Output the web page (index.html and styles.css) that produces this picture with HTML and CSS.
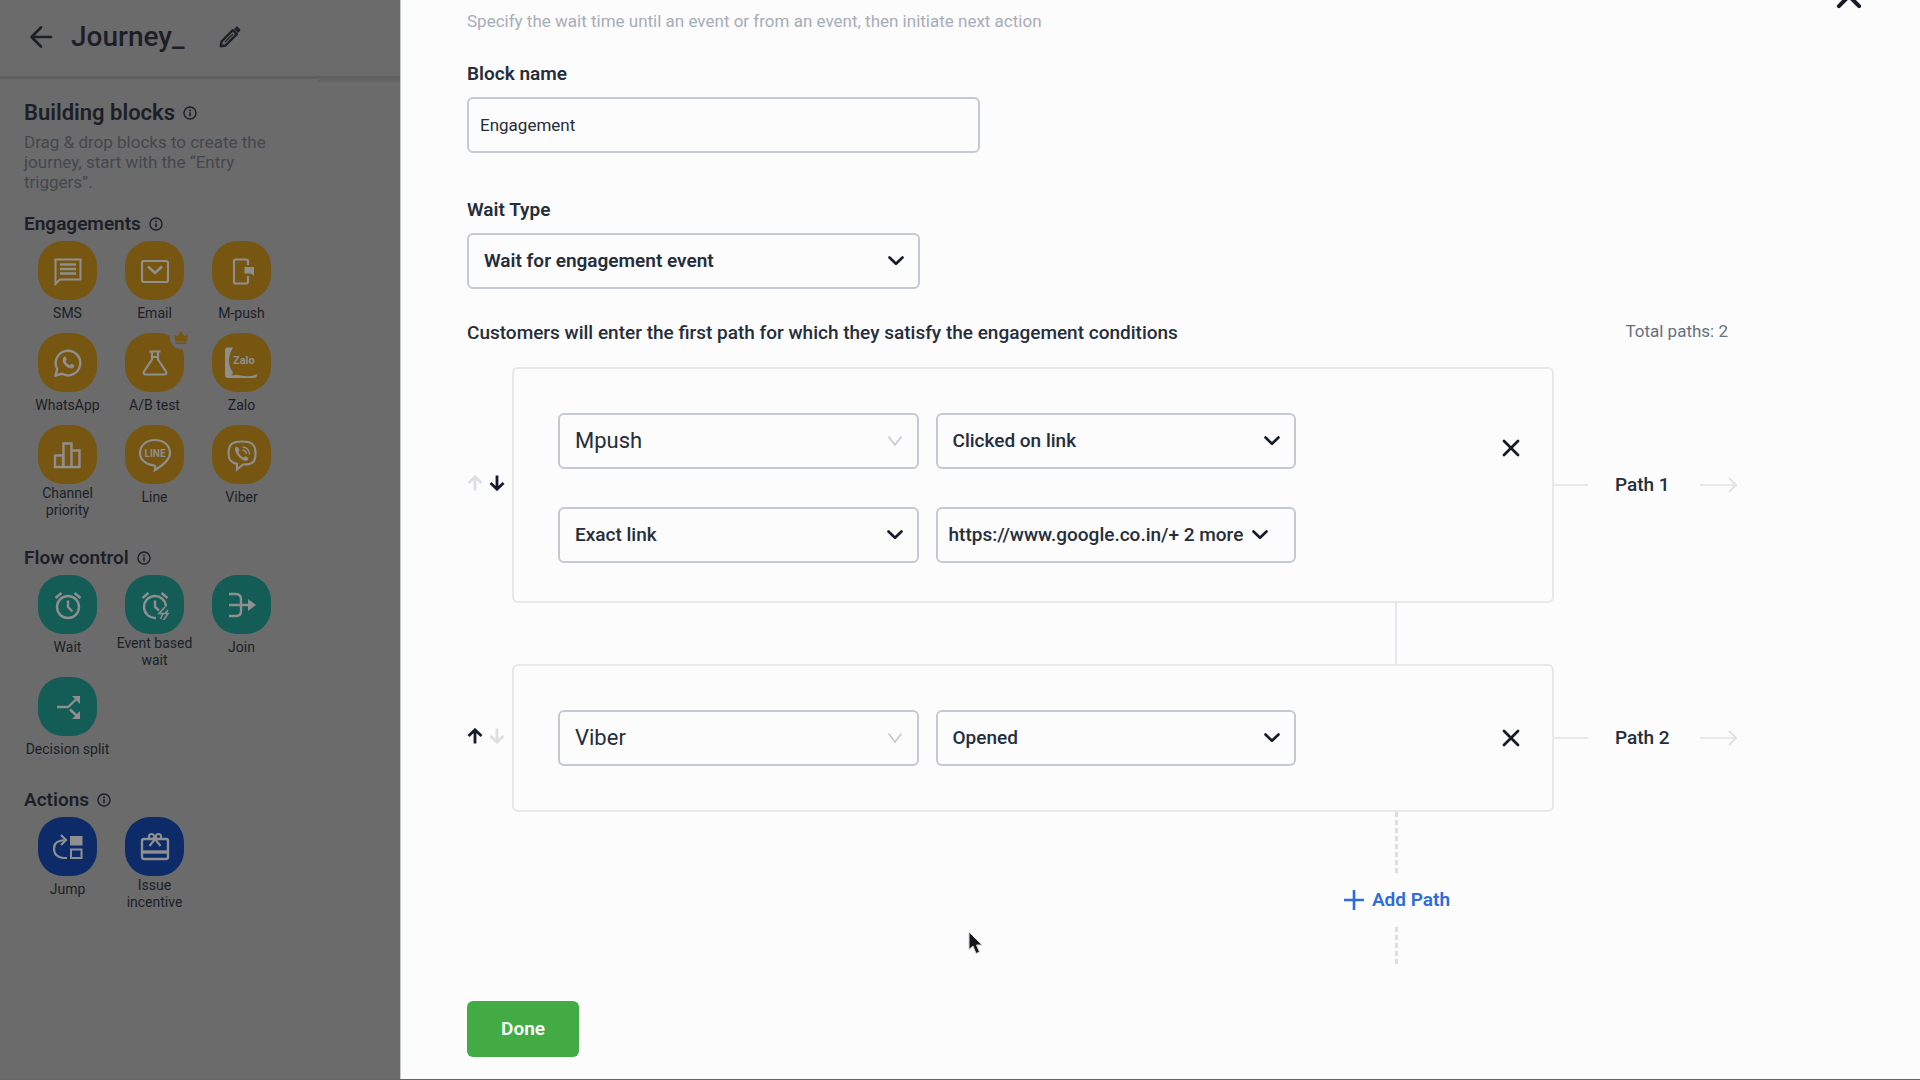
FILE: index.html
```html
<!DOCTYPE html>
<html lang="en">
<head>
<meta charset="utf-8">
<meta name="viewport" content="width=device-width, initial-scale=1">
<title>Journey_</title>
<link rel="stylesheet" href="styles.css">
</head>
<body>
<svg class="defs" aria-hidden="true">
  <symbol id="info" viewBox="0 0 16 16"><circle cx="8" cy="8" r="6.9" fill="none" stroke="currentColor" stroke-width="1.6"/><circle cx="8" cy="5" r="1.1" fill="currentColor"/><path d="M8 7.2v4.4" stroke="currentColor" stroke-width="1.8"/></symbol>
  <symbol id="chevron" viewBox="0 0 16 10"><path d="M1.5 1.5 8 7.8l6.500-6.300" fill="none" stroke="currentColor" stroke-width="2.600" stroke-linecap="round" stroke-linejoin="round"/></symbol>
  <symbol id="chevron-thin" viewBox="0 0 16 10"><path d="M1.500.5 8 9l6.500-8.500" fill="none" stroke="currentColor" stroke-width="1.500"/></symbol>
  <symbol id="up" viewBox="0 0 16 16"><path d="M8 15.500V2M1.500 8 8 1.800 14.500 8" fill="none" stroke="currentColor" stroke-width="2.800"/></symbol>
  <symbol id="down" viewBox="0 0 16 16"><path d="M8 .5V14M1.500 8 8 14.200 14.500 8" fill="none" stroke="currentColor" stroke-width="2.800"/></symbol>
  <symbol id="cross" viewBox="0 0 18 18"><path d="m2 2 14 14M16 2 2 16" fill="none" stroke="currentColor" stroke-width="2.800" stroke-linecap="round"/></symbol>
  <symbol id="out" viewBox="0 0 38 16"><path d="M0 8h36" stroke="currentColor" stroke-width="1.500"/><path d="m29 1 7 7-7 7" fill="none" stroke="currentColor" stroke-width="2"/></symbol>
</svg>
<div class="app">
  <aside class="sidebar">
    <header class="topbar">
      <button class="icon-btn" type="button" aria-label="Back"><svg width="24" height="24" viewBox="0 0 24 24"><path d="M22 12H3.500M12 2.500 2.500 12l9.500 9.500" fill="none" stroke="currentColor" stroke-width="2.600" stroke-linecap="round" stroke-linejoin="round"/></svg></button>
      <h1>Journey_</h1>
      <button class="icon-btn" type="button" aria-label="Rename"><svg width="22" height="22" viewBox="0 0 22 22"><path d="m1.800 20.200.7-4.700L13.800 4.200l4 4L6.500 19.500z" fill="none" stroke="currentColor" stroke-width="2.400" stroke-linejoin="round"/><path d="m6 16 8-8" stroke="currentColor" stroke-width="1.200"/><path d="m15 3 2.200-2.200q.8-.6 1.600.1l2.300 2.300q.7.800.1 1.600L19 7z" fill="currentColor"/></svg></button>
    </header>
    <div class="blocks">
      <h2>Building blocks <svg class="info"><use href="#info"/></svg></h2>
      <p class="hint">Drag &amp; drop blocks to create the journey, start with the “Entry triggers”.</p>

      <h3>Engagements <svg class="info"><use href="#info"/></svg></h3>
      <ul class="tiles yellow">
        <li><span class="tile"><svg viewBox="0 0 30 30"><path d="M2.500 28V3.500h25v20H7z" fill="none" stroke="currentColor" stroke-width="2"/><path d="M7 8.500h16M7 13h16M7 17.500h16" stroke="currentColor" stroke-width="2.400"/></svg></span><span class="label">SMS</span></li>
        <li><span class="tile"><svg viewBox="0 0 30 30"><rect x="2" y="5" width="26" height="21" rx="2" fill="none" stroke="currentColor" stroke-width="2.200"/><path d="M8 10.500l7 6.500 7-6.500" fill="none" stroke="currentColor" stroke-width="2.600"/></svg></span><span class="label">Email</span></li>
        <li><span class="tile"><svg viewBox="0 0 30 30"><path d="M21 9V5.500Q21 3.500 19 3.500H9Q7 3.500 7 5.500v20q0 2 2 2h10q2 0 2-2V20" fill="none" stroke="currentColor" stroke-width="2.200"/><path d="M17.500 11h9.500v9l-3-2.500h-6.500z" fill="currentColor"/></svg></span><span class="label">M-push</span></li>
        <li><span class="tile"><svg viewBox="0 0 30 30"><path d="M2.500 27.500 4.200 21A12.300 12.300 0 1 1 9 25.800z" fill="none" stroke="currentColor" stroke-width="2.400"/><path d="M10.500 9.500c1-1.500 2.200-1 2.500.3l.7 2-1 1.700c.9 1.800 2.200 3 4 3.800l1.600-1.500 2.700 1.300c.7.500.2 2.600-1.500 3.200-3.500 1.200-9.800-3.500-9.900-8.300z" fill="currentColor"/></svg></span><span class="label">WhatsApp</span></li>
        <li><span class="tile"><svg viewBox="0 0 30 30"><path d="M12 4v7.500L4 23.500q-1.500 3 2 3h18q3.500 0 2-3L18 11.500V4M9.500 3.500h11M12 9h6" fill="none" stroke="currentColor" stroke-width="2.200"/></svg><span class="crown"><svg width="14" height="14" viewBox="0 0 14 14"><path d="M0 3.500 3.500 5.500 7 0l3.500 5.500L14 3.500l-1.500 7h-11zM1.500 11.500h11V13h-11z" fill="currentColor"/></svg></span></span><span class="label">A/B test</span></li>
        <li><span class="tile"><svg class="zalo" viewBox="0 0 36 34"><path d="M9 1.500H4q-3 0-3 3V29q0 3 3 3h26q3 0 3.500-4-8 4-21 .8-3 .9-5.500.3 2-1 2-2.600Q1 15 9 1.500z" fill="currentColor"/><text x="9" y="18" font-size="11" font-weight="700" fill="currentColor">Zalo</text></svg></span><span class="label">Zalo</span></li>
        <li><span class="tile"><svg viewBox="0 0 30 30"><path d="M2 27V15.500h8V27zM10.500 27V3.500h8V27zM18.500 27V10.500h8V27z" fill="none" stroke="currentColor" stroke-width="2.400"/></svg></span><span class="label">Channel priority</span></li>
        <li><span class="tile"><svg class="wide" viewBox="0 0 34 34"><path d="M17 32q15-9 15-17C32 7 25 2 17 2S2 7 2 15c0 7 6 11.500 14 12.500q2 .5 1 4.500z" fill="none" stroke="currentColor" stroke-width="2.200"/><text x="17" y="19" font-size="10" font-weight="700" text-anchor="middle" fill="currentColor">LINE</text></svg></span><span class="label">Line</span></li>
        <li><span class="tile"><svg class="wide" viewBox="0 0 34 34"><path d="M17 3.500c9 0 13.500 2 13.500 12S26 26.500 18 26.500l-6 5v-5.700C5 24.500 3.500 21 3.500 15.500c0-10 4.500-12 13.500-12z" fill="none" stroke="currentColor" stroke-width="2.200"/><path d="M10 10c1.500-2.200 3-1.500 4.500 2l-1 2.200c1 2.500 2.500 4 4.700 5l2.300-1c3.500 1.800 3.700 3 1.500 4.300C18 24.500 9 15.500 10 10z" fill="currentColor"/><path d="M17.500 9q6.500.5 7 7.500M17.500 12q3.500.5 4 4" fill="none" stroke="currentColor" stroke-width="1.300"/></svg></span><span class="label">Viber</span></li>
      </ul>

      <h3>Flow control <svg class="info"><use href="#info"/></svg></h3>
      <ul class="tiles teal">
        <li><span class="tile"><svg viewBox="0 0 30 30"><circle cx="15" cy="17" r="11" fill="none" stroke="currentColor" stroke-width="2.400"/><path d="M15 10.500V17l4.500 4.500M2.500 8l6-5M27.500 8l-6-5" fill="none" stroke="currentColor" stroke-width="2.400"/></svg></span><span class="label">Wait</span></li>
        <li><span class="tile"><svg viewBox="0 0 30 30"><path d="M16 28A11 11 0 1 1 26 16.500M15 10.500V17l4 3.500M2.500 8l6-5M27.500 8l-6-5" fill="none" stroke="currentColor" stroke-width="2.400"/><path d="m25 17-6 6.500h4L20.500 29M28 20l-3 3.500h3L23 31" fill="none" stroke="currentColor" stroke-width="1.600"/></svg></span><span class="label">Event based wait</span></li>
        <li><span class="tile"><svg viewBox="0 0 30 30"><path d="M2 4h7q5 0 5 5v12q0 5-5 5H2M2 15h22" fill="none" stroke="currentColor" stroke-width="2.400"/><path d="m21 9 8 6-8 6z" fill="currentColor"/></svg></span><span class="label">Join</span></li>
        <li><span class="tile"><svg viewBox="0 0 30 30"><path d="M4 15h11l9-8.500M17 17.500l7 6.500" fill="none" stroke="currentColor" stroke-width="2.400"/><path d="M19 4h8v8zM19 27h8v-8z" fill="currentColor"/></svg></span><span class="label">Decision split</span></li>
      </ul>

      <h3>Actions <svg class="info"><use href="#info"/></svg></h3>
      <ul class="tiles blue">
        <li><span class="tile"><svg viewBox="0 0 30 30"><path d="M14 26h-4Q1 25 1 16.500 1 8.500 12 8" fill="none" stroke="currentColor" stroke-width="2.200"/><path d="m8 3 5 5-5 5" fill="none" stroke="currentColor" stroke-width="2.200"/><path d="M17 4h12.500v9.500H17z" fill="currentColor"/><path d="M18 17.500h10.500V26H18z" fill="none" stroke="currentColor" stroke-width="2"/></svg></span><span class="label">Jump</span></li>
        <li><span class="tile"><svg viewBox="0 0 30 30"><rect x="2" y="7" width="26" height="20" rx="2" fill="none" stroke="currentColor" stroke-width="2.400"/><path d="M2 20h26" stroke="currentColor" stroke-width="3.400"/><circle cx="11.500" cy="4.500" r="2.600" fill="none" stroke="currentColor" stroke-width="2"/><circle cx="18.500" cy="4.500" r="2.600" fill="none" stroke="currentColor" stroke-width="2"/><path d="m9.500 14 5.500-7 5.500 7" fill="none" stroke="currentColor" stroke-width="2.200"/></svg></span><span class="label">Issue incentive</span></li>
      </ul>
    </div>
  </aside>

  <main class="panel">
    <button class="icon-btn close" type="button" aria-label="Close"><svg width="26" height="26"><use href="#cross"/></svg></button>
    <p class="intro">Specify the wait time until an event or from an event, then initiate next action</p>
    <form class="form">
      <div class="field">
        <label for="block-name">Block name</label>
        <input class="control name" id="block-name" type="text" value="Engagement">
      </div>
      <div class="field">
        <label for="wait-type">Wait Type</label>
        <span class="select wait"><select class="control strong" id="wait-type"><option>Wait for engagement event</option></select><svg class="chevron"><use href="#chevron"/></svg></span>
      </div>
      <div class="summary">
        <p>Customers will enter the first path for which they satisfy the engagement conditions</p>
        <span class="total">Total paths: 2</span>
      </div>
      <div class="paths">
        <div class="order">
          <button class="icon-btn" type="button" aria-label="Move path 1 up" disabled><svg width="16" height="16"><use href="#up"/></svg></button>
          <button class="icon-btn" type="button" aria-label="Move path 1 down"><svg width="16" height="16"><use href="#down"/></svg></button>
        </div>
        <section class="card card-multi" aria-label="Path 1">
          <div class="rules">
            <span class="select"><select class="control large" aria-label="Channel"><option>Mpush</option></select><svg class="chevron muted"><use href="#chevron-thin"/></svg></span>
            <span class="select"><select class="control" aria-label="Event"><option>Clicked on link</option></select><svg class="chevron"><use href="#chevron"/></svg></span>
            <span class="select"><select class="control" aria-label="Link match"><option>Exact link</option></select><svg class="chevron"><use href="#chevron"/></svg></span>
            <button class="control links" type="button" aria-haspopup="listbox"><span>https://www.google.co.in/+ 2 more</span><svg class="chevron"><use href="#chevron"/></svg></button>
          </div>
          <button class="icon-btn remove" type="button" aria-label="Remove path 1"><svg width="18" height="18"><use href="#cross"/></svg></button>
        </section>
        <div class="exit"><span class="stub"></span><span class="path-name">Path 1</span><svg class="out"><use href="#out"/></svg></div>

        <div class="link"><span class="link-line"></span></div>

        <div class="order">
          <button class="icon-btn" type="button" aria-label="Move path 2 up"><svg width="16" height="16"><use href="#up"/></svg></button>
          <button class="icon-btn" type="button" aria-label="Move path 2 down" disabled><svg width="16" height="16"><use href="#down"/></svg></button>
        </div>
        <section class="card" aria-label="Path 2">
          <div class="rules">
            <span class="select"><select class="control large" aria-label="Channel"><option>Viber</option></select><svg class="chevron muted"><use href="#chevron-thin"/></svg></span>
            <span class="select"><select class="control" aria-label="Event"><option>Opened</option></select><svg class="chevron"><use href="#chevron"/></svg></span>
          </div>
          <button class="icon-btn remove" type="button" aria-label="Remove path 2"><svg width="18" height="18"><use href="#cross"/></svg></button>
        </section>
        <div class="exit"><span class="stub"></span><span class="path-name">Path 2</span><svg class="out"><use href="#out"/></svg></div>

        <div class="add">
          <span class="dash long"></span>
          <button class="add-btn" type="button"><svg width="20" height="20" viewBox="0 0 20 20"><path d="M10 0v20M0 10h20" stroke="currentColor" stroke-width="2.600"/></svg>Add Path</button>
          <span class="dash"></span>
        </div>
      </div>
      <button class="done" type="submit">Done</button>
    </form>
  </main>
</div>
<svg class="cursor" width="16" height="24" viewBox="0 0 16 24" aria-hidden="true"><path d="M1 1v17.500l4-3.500 3 7.500 3.500-1.500-3-7H14z" fill="#17181c" stroke="#d4d5d7" stroke-width="1"/></svg>
</body>
</html>
```

FILE: styles.css
```css
* { box-sizing: border-box; }

body {
  margin: 0;
  font-family: Roboto, "Liberation Sans", sans-serif;
  font-size: 19px;
  font-weight: 500;
  line-height: 24px;
  color: #262d3b;
  background: #fcfcfc;
}

h1, h2, h3, p, ul { margin: 0; padding: 0; }
.defs { display: none; }

.app {
  display: flex;
  min-height: 100vh;
  border-bottom: 1px solid #66656a;
}

.icon-btn {
  display: flex;
  padding: 0;
  border: 0;
  background: none;
  color: #151b27;
}
.icon-btn:disabled { color: #dcdfe2; }

/* Sidebar */
.sidebar {
  flex: 0 0 400px;
  background: #6b6b6b;
  color: #1c1f28;
}
.sidebar .icon-btn { color: #1e2027; }

.topbar {
  position: relative;
  display: flex;
  align-items: center;
  height: 79px;
  padding: 0 29px 2px;
  border-bottom: 3px solid #5e6062;
}
/* edge of the canvas toolbar that shows beside the panel */
.topbar::after {
  content: "";
  position: absolute;
  right: 0;
  bottom: -6px;
  width: 82px;
  height: 4px;
  background: #636466;
}
.topbar h1 {
  margin: 0 34px 0 18px;
  font-size: 28px;
  font-weight: 500;
  line-height: 32px;
}

.blocks { padding: 22px 24px; }
.blocks h2, .blocks h3 {
  display: flex;
  align-items: center;
  gap: 8px;
  line-height: 24px;
  font-weight: 600;
}
.blocks h2 { font-size: 22px; }
.blocks h3 { margin-bottom: 5px; font-size: 19px; }
.info { width: 14px; height: 14px; }
.hint {
  width: 250px;
  margin: 7px 0 20px;
  font-size: 17px;
  font-weight: 400;
  line-height: 20px;
  color: #44474d;
}

.tiles {
  display: grid;
  grid-template-columns: repeat(3, 87px);
  row-gap: 8px;
  margin-bottom: 27px;
  list-style: none;
}
.tiles li {
  display: flex;
  flex-direction: column;
  align-items: center;
}
.tile {
  position: relative;
  display: flex;
  align-items: center;
  justify-content: center;
  width: 59px;
  height: 59px;
  border-radius: 25px;
  color: #8f8f8f;
}
.tile > svg { width: 30px; height: 30px; }
.tile > .wide { width: 34px; height: 34px; }
.tile > .zalo { width: 36px; height: 34px; }
.yellow .tile { background: #765610; }
.teal .tile { background: #145c56; }
.blue .tile { background: #0d2a69; }
.crown {
  position: absolute;
  top: -6px;
  right: -8px;
  display: flex;
  padding: 4px;
  border-radius: 11px;
  background: #6b6b6b;
  color: #765610;
}
.label {
  display: flex;
  align-items: center;
  justify-content: center;
  min-height: 25px;
  padding-top: 1px;
  font-size: 14px;
  font-weight: 400;
  line-height: 17px;
  text-align: center;
}

/* Settings panel */
.panel {
  position: relative;
  flex: 1;
  min-width: 0;
  padding: 9px 182px 22px 66px;
  border-left: 1px solid #c3c8d2;
  overflow: hidden;
}
.close {
  position: absolute;
  top: -17px;
  right: 58px;
}
.intro {
  font-size: 17px;
  font-weight: 400;
  color: #a6adb8;
}
.field {
  display: flex;
  flex-direction: column;
  gap: 11px;
}
.field label { font-weight: 600; }
.form > .field { margin-top: 29px; }
.form > .field + .field { margin-top: 45px; }

.control {
  width: 100%;
  height: 56px;
  padding: 0 15px;
  border: 2px solid #c5cad0;
  border-radius: 6px;
  background: #fcfcfc;
  color: #262d3b;
  font: 500 19px/24px Roboto, "Liberation Sans", sans-serif;
  appearance: none;
}
.control.name {
  max-width: 513px;
  padding: 0 11px;
  font-size: 17px;
  font-weight: 400;
}
.control.strong { font-weight: 600; }
.control.large { font-size: 22px; font-weight: 400; }
.select {
  display: grid;
  align-items: center;
}
.select > * { grid-area: 1 / 1; }
.select .chevron {
  justify-self: end;
  margin-right: 16px;
  pointer-events: none;
}
.wait { max-width: 453px; }
.chevron {
  flex: none;
  width: 16px;
  height: 10px;
  color: #151b27;
}
.chevron.muted { color: #c3c7cc; }
.links {
  display: flex;
  align-items: center;
  gap: 9px;
  padding: 0 11px;
  white-space: nowrap;
}

.summary {
  display: flex;
  justify-content: space-between;
  margin: 32px 10px 22px 0;
}
.total {
  font-size: 17px;
  font-weight: 400;
  line-height: 20px;
  color: #667080;
}

.paths {
  display: grid;
  grid-template-columns: 45px 1fr 184px;
}
.order {
  display: flex;
  align-items: center;
  gap: 6px;
  padding-bottom: 5px;
}
.card {
  display: flex;
  justify-content: space-between;
  gap: 24px;
  padding: 44px 32px 44px 44px;
  border: 2px solid #e6e8e9;
  border-radius: 6px;
}
.card-multi { padding-bottom: 38px; }
.rules {
  flex: 0 1 738px;
  display: grid;
  grid-template-columns: 1fr 1fr;
  gap: 38px 17px;
}
.remove {
  align-self: flex-start;
  margin-top: 19px;
}
.card-multi .remove { margin-top: 26px; }
.exit {
  display: flex;
  align-items: center;
}
.stub {
  width: 34px;
  margin-right: 27px;
  border-top: 2px solid #e6e8e9;
}
.path-name { flex: 1; }
.out {
  width: 38px;
  height: 16px;
  color: #dfe2e4;
}
.link, .add { grid-column: 2 / -1; }
.link {
  display: flex;
  justify-content: flex-end;
  height: 61px;
  padding-right: 341px;
}
.link-line { border-left: 2px solid #e6e8e9; }
.add {
  justify-self: end;
  display: flex;
  flex-direction: column;
  align-items: center;
  margin-right: 288px;
}
.dash {
  width: 3px;
  height: 38px;
  background: repeating-linear-gradient(#dcdee0 0 5px, transparent 5px 8px);
}
.dash.long { height: 61px; }
.add-btn {
  display: flex;
  align-items: center;
  gap: 8px;
  margin: 15px 0;
  padding: 0;
  border: 0;
  background: none;
  color: #2c6be0;
  font: 600 19px/24px Roboto, "Liberation Sans", sans-serif;
}
.done {
  display: block;
  width: 112px;
  height: 56px;
  margin-top: 36px;
  border: 0;
  border-radius: 6px;
  background: #43ab43;
  color: #fcfcfc;
  font: 600 19px/24px Roboto, "Liberation Sans", sans-serif;
}

.cursor {
  position: absolute;
  top: 931px;
  left: 968px;
}
```
